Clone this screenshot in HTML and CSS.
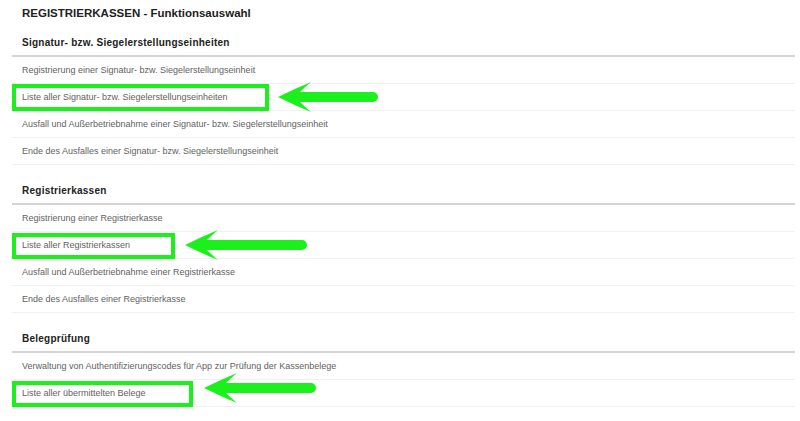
FILE: index.html
```html
<!DOCTYPE html>
<html lang="de">
<head>
<meta charset="utf-8">
<title>REGISTRIERKASSEN - Funktionsauswahl</title>
<link rel="stylesheet" href="styles.css">
</head>
<body>
<div class="page">
  <h1 class="title">REGISTRIERKASSEN - Funktionsauswahl</h1>

  <section class="section">
    <h2 class="heading">Signatur- bzw. Siegelerstellungseinheiten</h2>
    <ul class="rows">
      <li class="row">Registrierung einer Signatur- bzw. Siegelerstellungseinheit</li>
      <li class="row">Liste aller Signatur- bzw. Siegelerstellungseinheiten
        <span class="mark mark-1"></span>
        <svg class="arrow arrow-1" width="100" height="32" viewBox="0 0 100 32"><path d="M0,16 Q16,8 33,1 Q27,6 22,11 L95,11 A5,5 0 0 1 95,21 L22,21 Q27,26 33,31 Q16,24 0,16 Z"/></svg>
      </li>
      <li class="row">Ausfall und Außerbetriebnahme einer Signatur- bzw. Siegelerstellungseinheit</li>
      <li class="row">Ende des Ausfalles einer Signatur- bzw. Siegelerstellungseinheit</li>
    </ul>
  </section>

  <section class="section">
    <h2 class="heading">Registrierkassen</h2>
    <ul class="rows">
      <li class="row">Registrierung einer Registrierkasse</li>
      <li class="row">Liste aller Registrierkassen
        <span class="mark mark-2"></span>
        <svg class="arrow arrow-2" width="122" height="32" viewBox="0 0 122 32"><path d="M0,16 Q16,8 33,1 Q27,6 22,11 L117,11 A5,5 0 0 1 117,21 L22,21 Q27,26 33,31 Q16,24 0,16 Z"/></svg>
      </li>
      <li class="row">Ausfall und Außerbetriebnahme einer Registrierkasse</li>
      <li class="row">Ende des Ausfalles einer Registrierkasse</li>
    </ul>
  </section>

  <section class="section">
    <h2 class="heading">Belegprüfung</h2>
    <ul class="rows">
      <li class="row">Verwaltung von Authentifizierungscodes für App zur Prüfung der Kassenbelege</li>
      <li class="row">Liste aller übermittelten Belege
        <span class="mark mark-3"></span>
        <svg class="arrow arrow-3" width="112" height="32" viewBox="0 0 112 32"><path d="M0,16 Q16,8 33,1 Q27,6 22,11 L107,11 A5,5 0 0 1 107,21 L22,21 Q27,26 33,31 Q16,24 0,16 Z"/></svg>
      </li>
    </ul>
  </section>
</div>
</body>
</html>
```

FILE: styles.css
```css
html, body {
  margin: 0;
  padding: 0;
  background: #ffffff;
}

body {
  font-family: "Liberation Sans", Arial, sans-serif;
  color: #333333;
}

.page {
  margin: 0 5px 0 12px;
}

.title {
  margin: 4px 0 0;
  padding-left: 10px;
  font-size: 11.5px;
  line-height: 18px;
  font-weight: bold;
  color: #222222;
}

.section {
  margin-top: 5px;
}

.section:first-of-type {
  margin-top: 0;
}

.heading {
  margin: 0;
  padding: 14px 0 5px 10px;
  font-size: 10px;
  line-height: 14px;
  letter-spacing: 0.25px;
  font-weight: bold;
  color: #222222;
  border-bottom: 2px solid #d4d4d4;
}

.rows {
  list-style: none;
  margin: 0;
  padding: 0;
}

.row {
  position: relative;
  display: flex;
  align-items: center;
  height: 26px;
  padding-left: 10px;
  border-bottom: 1px solid #f1f1f1;
  font-size: 9px;
  color: #626262;
}

.mark {
  position: absolute;
  left: 0;
  top: 0;
  height: 27px;
  box-sizing: border-box;
  border: 4px solid #1cf01c;
}

.mark-1 { width: 257px; }
.mark-2 { width: 163px; top: 1px; height: 26px; }
.mark-3 { width: 181px; top: 1px; height: 26px; }

.arrow {
  position: absolute;
  top: -3px;
  fill: #1cf01c;
}

.arrow-1 { left: 266px; }
.arrow-2 { left: 173px; }
.arrow-3 { left: 192px; top: -8px; }
```
